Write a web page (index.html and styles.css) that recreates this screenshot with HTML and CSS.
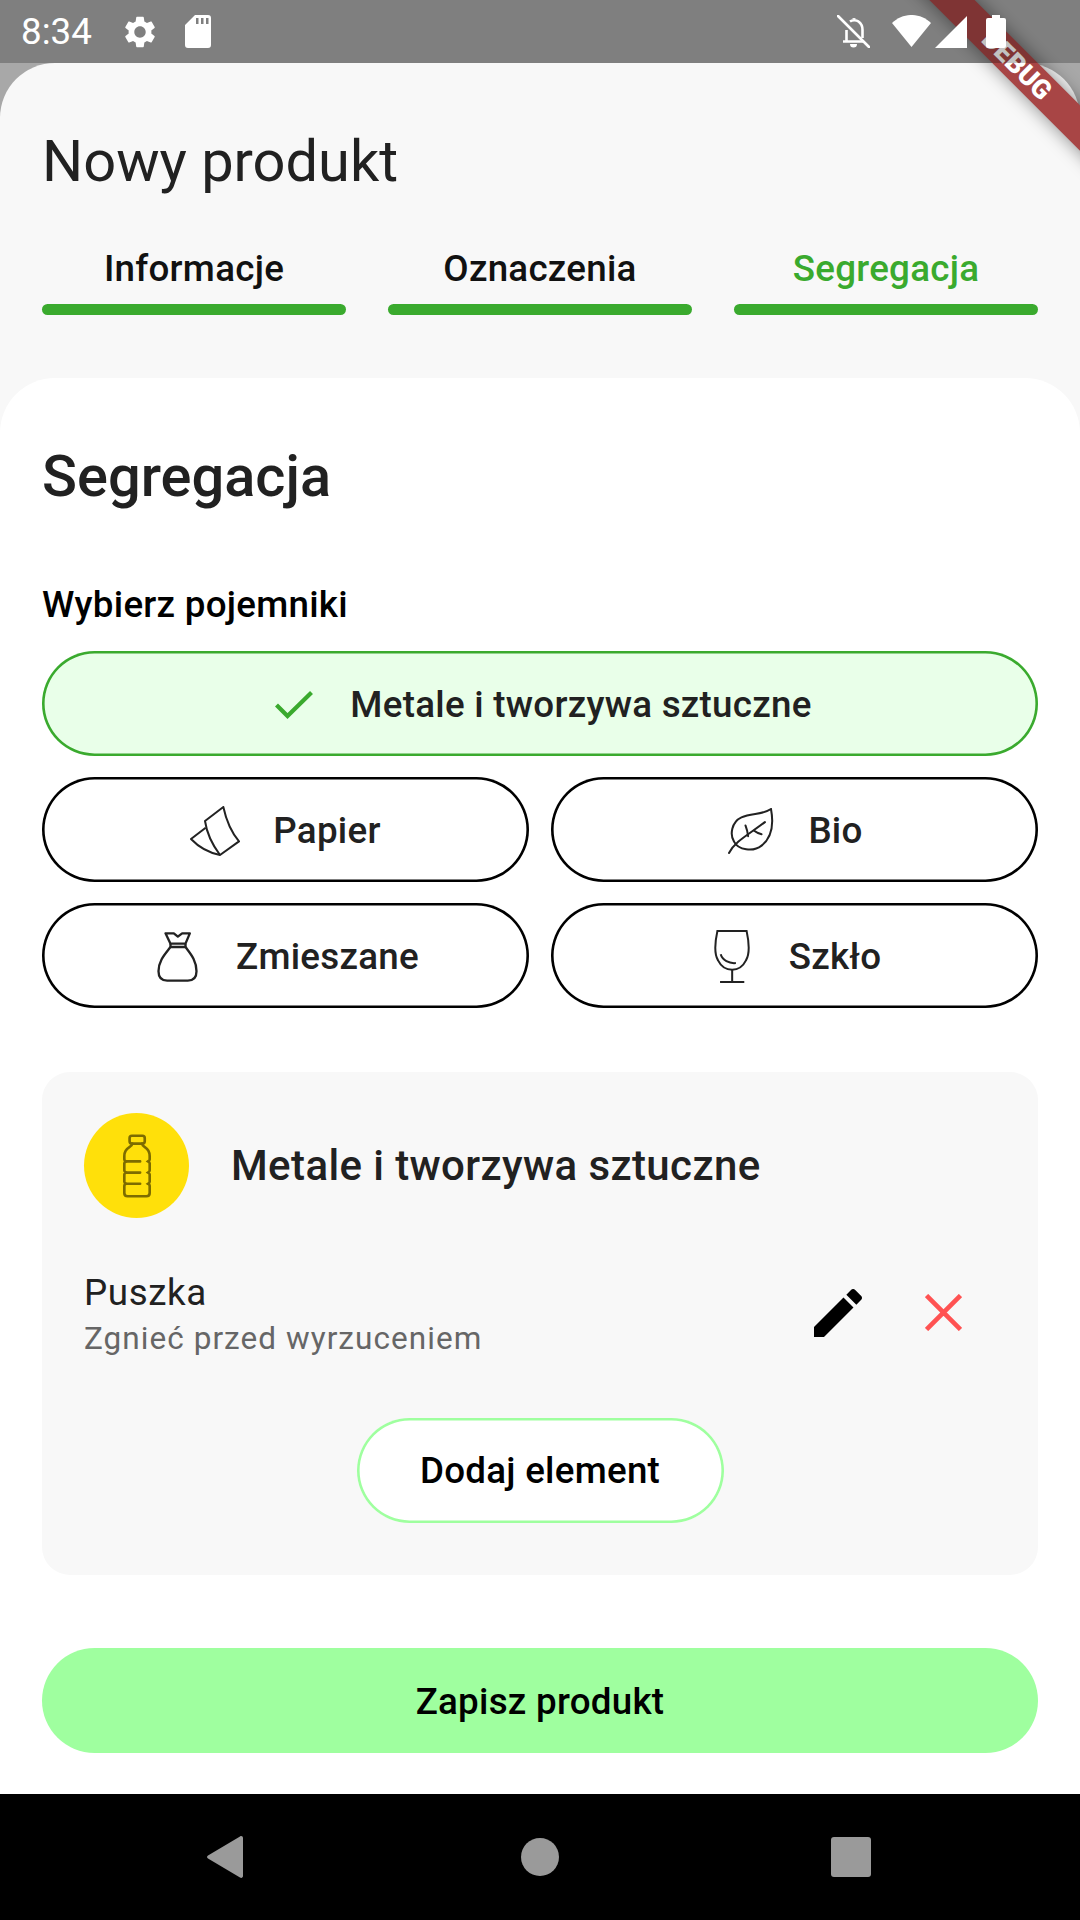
FILE: index.html

```html
<!DOCTYPE html>
<html lang="pl">
<head>
    <meta charset="UTF-8">
    <meta name="viewport" content="width=device-width, initial-scale=1.0">
    <title>Nowy produkt</title>
    <link rel="stylesheet" href="styles.css">
</head>
<body>
    <div class="app">
        <div class="status-bar">
            <span class="clock">8:34</span>
            <svg class="icon-gear" viewBox="0 0 24 24"><path fill="#fff" d="M19.14 12.94c.04-.3.06-.61.06-.94 0-.32-.02-.64-.07-.94l2.03-1.58c.18-.14.23-.41.12-.61l-1.92-3.32c-.12-.22-.37-.29-.59-.22l-2.39.96c-.5-.38-1.03-.7-1.62-.94l-.36-2.54c-.04-.24-.24-.41-.48-.41h-3.84c-.24 0-.43.17-.47.41l-.36 2.54c-.59.24-1.13.57-1.62.94l-2.39-.96c-.22-.08-.47 0-.59.22L2.74 8.87c-.12.21-.08.47.12.61l2.03 1.58c-.05.3-.09.63-.09.94s.02.64.07.94l-2.03 1.58c-.18.14-.23.41-.12.61l1.92 3.32c.12.22.37.29.59.22l2.39-.96c.5.38 1.03.7 1.62.94l.36 2.54c.05.24.24.41.48.41h3.84c.24 0 .44-.17.47-.41l.36-2.54c.59-.24 1.13-.56 1.62-.94l2.39.96c.22.08.47 0 .59-.22l1.92-3.32c.12-.22.07-.47-.12-.61l-2.01-1.58zM12 15.6c-1.98 0-3.6-1.62-3.6-3.6s1.62-3.6 3.6-3.6 3.6 1.62 3.6 3.6-1.62 3.6-3.6 3.6z"/></svg>
            <svg class="icon-sd" viewBox="0 0 26 33"><path fill="#fff" fill-rule="evenodd" d="M10 0H23a3 3 0 0 1 3 3V30a3 3 0 0 1-3 3H3a3 3 0 0 1-3-3V10zM11 3V9h2.500V3zM16 3V9h2.500V3zM21 3V9h2.500V3z"/></svg>
            <svg class="icon-bell" viewBox="0 0 33 33"><g fill="none" stroke="#fff" stroke-width="2.600"><path d="M6 26.500H27M9.500 26V15M13 6.500C15 5 19 4.500 21.500 6.500C25 9 25.500 12 25.500 15V23"/><path d="M1 1L32 32" stroke-linecap="round"/></g><path fill="#fff" d="M13 29h7a3.500 3.500 0 0 1-7 0zM15 4a2.500 2.500 0 0 1 4 0z"/></svg>
            <svg class="icon-wifi" viewBox="0 0 39 32"><path fill="#fff" d="M0 8C11-2.700 28-2.700 39 8L19.500 32z"/></svg>
            <svg class="icon-signal" viewBox="0 0 32 32"><path fill="#fff" d="M32 0V32H0z"/></svg>
            <svg class="icon-battery" viewBox="0 0 20 33"><path fill="#fff" d="M6 0H14V3H18a2 2 0 0 1 2 2V31a2 2 0 0 1-2 2H2a2 2 0 0 1-2-2V5a2 2 0 0 1 2-2H6z"/></svg>
        </div>

        <div class="debug-banner">DEBUG</div>

        <main class="sheet">
            <header class="sheet-head">
                <h1>Nowy produkt</h1>
                <div class="tabs">
                    <div class="tab">Informacje<div class="tab-bar"></div></div>
                    <div class="tab">Oznaczenia<div class="tab-bar"></div></div>
                    <div class="tab tab-active">Segregacja<div class="tab-bar"></div></div>
                </div>
            </header>

            <section class="panel">
                <h2>Segregacja</h2>
                <div class="field-label">Wybierz pojemniki</div>

                <div class="bins">
                    <button type="button" class="bin bin-wide bin-selected">
                        <svg class="bin-check" viewBox="0 0 38 28"><path fill="none" stroke="#3aaa2e" stroke-width="4.200" d="M1.500 14L12.500 25L36.500 1.500"/></svg>
                        Metale i tworzywa sztuczne
                    </button>
                    <button type="button" class="bin">
                        <svg class="bin-icon icon-paper" viewBox="0 0 150 150"><g fill="none" stroke="#222" stroke-width="6" stroke-linejoin="round"><path d="M100 3L45 45C50 80 70 120 90 147L147 106C125 80 108 40 100 3Z"/><path d="M47 65L3 99C25 122 55 140 90 147"/></g></svg>
                        Papier
                    </button>
                    <button type="button" class="bin">
                        <svg class="bin-icon icon-leaf" viewBox="0 0 137 137"><g fill="none" stroke="#222" stroke-width="6" stroke-linecap="round"><path d="M128 3C105 20 70 15 40 28C10 42 5 80 18 100C30 125 75 132 100 112C135 85 135 40 128 3Z"/><path d="M3 134C20 100 60 80 110 42"/><path d="M52 52C56 62 58 70 60 84M78 68C85 74 92 76 100 78"/></g></svg>
                        Bio
                    </button>
                    <button type="button" class="bin">
                        <svg class="bin-icon icon-bag" viewBox="0 0 122 150"><g fill="none" stroke="#222" stroke-width="7" stroke-linejoin="round"><path d="M25 4H50L62 14L75 4H98L85 35H40Z"/><path d="M40 35V45H85V35"/><path d="M40 45C25 65 4 85 4 118C4 140 15 146 30 146H92C107 146 118 140 118 118C118 85 100 65 85 45"/></g></svg>
                        Zmieszane
                    </button>
                    <button type="button" class="bin">
                        <svg class="bin-icon icon-glass" viewBox="0 0 107 157"><g fill="none" stroke="#222" stroke-width="6"><path d="M10 3H97C105 40 107 70 95 90C85 110 70 118 54 118C38 118 22 110 12 90C0 70 2 40 10 3Z"/><path d="M20 72C25 90 45 100 65 98M54 118V154M18 154H90"/></g></svg>
                        Szkło
                    </button>
                </div>

                <div class="bin-card">
                    <div class="bin-card-head">
                        <div class="bin-badge">
                            <svg class="icon-bottle" viewBox="0 0 85 192"><g fill="none" stroke="#7d6c00" stroke-width="8" stroke-linecap="round"><rect x="20" y="4" width="46" height="24" rx="7"/><path d="M28 28C28 42 4 36 4 66V76C4 79 6 80 9 82C6 84 4 85 4 88V110C4 113 6 114 9 116C6 118 4 119 4 122V144C4 147 6 148 9 150C6 152 4 153 4 156V178C4 184 8 188 14 188H71C77 188 81 184 81 178V156C81 153 79 152 76 150C79 148 81 147 81 144V122C81 119 79 118 76 116C79 114 81 113 81 110V88C81 85 79 84 76 82C79 80 81 79 81 76V66C81 36 58 42 58 28"/><path d="M9 82H52M9 116H52M9 150H52"/></g></svg>
                        </div>
                        <div class="bin-card-title">Metale i tworzywa sztuczne</div>
                    </div>

                    <div class="item-row">
                        <div class="item-text">
                            <div class="item-name">Puszka</div>
                            <div class="item-note">Zgnieć przed wyrzuceniem</div>
                        </div>
                        <svg class="icon-edit" viewBox="3 3 18 18"><path fill="#000" d="M3 17.250V21h3.750L17.810 9.940l-3.750-3.750L3 17.250zM20.710 7.040c.39-.39.39-1.020 0-1.410l-2.340-2.340c-.39-.39-1.020-.39-1.410 0l-1.830 1.830 3.750 3.750 1.830-1.830z"/></svg>
                        <svg class="icon-close" viewBox="0 0 36 36"><path fill="none" stroke="#ff5252" stroke-width="4.500" d="M1.500 1.500L34.500 34.500M34.500 1.500L1.500 34.500"/></svg>
                    </div>

                    <button type="button" class="add-item">Dodaj element</button>
                </div>

                <button type="button" class="save">Zapisz produkt</button>
            </section>
        </main>

        <nav class="nav-bar">
            <svg class="nav-back" viewBox="0 0 36 42"><path fill="#9a9a9a" d="M33 .500C34.500-.500 36 .500 36 2V40C36 41.500 34.500 42.500 33 41.500L1 22.500C-.300 21.500-.300 20.500 1 19.500Z"/></svg>
            <div class="nav-home"></div>
            <div class="nav-recent"></div>
        </nav>
    </div>
</body>
</html>
```

FILE: styles.css

```css
* { box-sizing: border-box; }
html, body { margin: 0; padding: 0; overflow: hidden; }
body { font-family: Roboto, "Noto Sans", sans-serif; color: #212121; }
button { font-family: inherit; cursor: pointer; }

.app { position: relative; width: 1080px; height: 1920px; display: flex; flex-direction: column; overflow: hidden; background: #a8a8a8; }

/* status bar sits above the debug ribbon, it tints it too */
.status-bar { position: relative; z-index: 2; height: 63px; flex: none; display: flex; align-items: center; padding-left: 21px; background: rgba(0, 0, 0, .24); color: #fff; }
.clock { font-size: 36.75px; line-height: 63px; width: 71px; white-space: nowrap; }
.status-bar svg { display: block; flex: none; }
.icon-gear { width: 38px; height: 38px; margin-left: 29px; }
.icon-sd { width: 26px; height: 33px; margin-left: 26px; }
.icon-bell { width: 33px; height: 33px; margin-left: auto; }
.icon-wifi { width: 39px; height: 32px; margin-left: 22px; margin-top: -2px; }
.icon-signal { width: 32px; height: 32px; margin-left: 4px; }
.icon-battery { width: 20px; height: 33px; margin-left: 19px; margin-right: 74px; }

.debug-banner { position: absolute; z-index: 1; left: 867px; top: 49px; width: 300px; height: 32px; transform: rotate(45deg); background: #a84545; box-shadow: 0 0 18px rgba(0, 0, 0, .45); color: #fff; font-size: 26.8px; font-weight: 900; line-height: 32px; text-align: center; }

.sheet { flex: 1; min-height: 0; display: flex; flex-direction: column; background: #f8f8f8; border-radius: 55px 55px 0 0; }
.sheet-head { height: 315px; flex: none; padding: 65px 42px 0; }
h1 { margin: 0; font-size: 57.75px; font-weight: 400; line-height: 66px; }
.tabs { display: flex; gap: 42px; margin-top: 55px; }
.tab { flex: 1; font-size: 36.75px; font-weight: 500; line-height: 39px; letter-spacing: .26px; text-align: center; color: #111; }
.tab-bar { height: 11px; margin-top: 16px; border-radius: 6px; background: #3aaa2e; }
.tab-active { color: #3aaa2e; }

.panel { flex: 1; min-height: 0; padding: 0 42px; background: #fff; border-radius: 55px 55px 0 0; }
h2 { margin: 0; padding-top: 65px; font-size: 57.75px; font-weight: 500; line-height: 66px; }
.field-label { margin-top: 75px; font-size: 36.75px; font-weight: 500; line-height: 42px; letter-spacing: .26px; color: #000; }

.bins { display: grid; grid-template-columns: 1fr 1fr; gap: 21px 22px; margin-top: 25px; }
.bin { height: 105px; display: flex; align-items: center; justify-content: center; padding: 2px 0 0; background: #fff; border: none; box-shadow: inset 0 0 0 2.6px #000; border-radius: 53px; font-size: 36.75px; font-weight: 500; letter-spacing: .26px; color: #212121; }
.bin-wide { grid-column: 1 / 3; }
.bin-selected { background: #e9ffe9; box-shadow: inset 0 0 0 2.6px #3aaa2e; }
.bin-check { width: 38px; height: 28px; margin-left: 7px; margin-right: 37px; }
.bin-icon { display: block; flex: none; }
.icon-paper { width: 50px; height: 50px; margin-right: 33px; }
.icon-leaf { width: 46px; height: 46px; margin-left: 2px; margin-right: 34px; }
.icon-bag { width: 41px; height: 50px; margin-left: 5px; margin-right: 38px; }
.icon-glass { width: 36px; height: 53px; margin-left: 6px; margin-right: 39px; }

.bin-card { height: 503px; margin-top: 64px; padding: 41px 42px 0; background: #f8f8f8; border-radius: 28px; }
.bin-card-head { display: flex; align-items: center; }
.bin-badge { width: 105px; height: 105px; flex: none; display: flex; align-items: center; justify-content: center; border-radius: 50%; background: #ffe00a; }
.icon-bottle { width: 28px; height: 64px; display: block; }
.bin-card-title { margin-left: 42px; font-size: 42px; font-weight: 500; letter-spacing: .39px; }

.item-row { display: flex; align-items: center; margin-top: 53px; }
.item-text { flex: 1; }
.item-name { font-size: 36.75px; line-height: 44px; letter-spacing: .62px; color: #212121; }
.item-note { margin-top: 4px; font-size: 31.5px; line-height: 40px; letter-spacing: 1.05px; color: #666; }
.icon-edit { width: 48px; height: 48px; flex: none; display: block; margin-top: -5px; }
.icon-close { width: 37px; height: 37px; flex: none; display: block; margin-left: 63px; margin-right: 34px; margin-top: -5px; }

.add-item { display: block; width: 367px; height: 105px; margin: 59px auto 0; padding: 0; background: #fff; border: none; box-shadow: inset 0 0 0 2.6px #9fff9f; border-radius: 53px; font-size: 36.75px; font-weight: 500; letter-spacing: .26px; color: #000; }

.save { display: block; width: 100%; height: 105px; margin-top: 73px; padding: 2px 0 0; background: #9fff9f; border: none; border-radius: 53px; font-size: 36.75px; font-weight: 500; letter-spacing: .26px; color: #000; }

.nav-bar { height: 126px; flex: none; display: flex; align-items: center; justify-content: space-between; padding: 0 209px 0 207px; background: #000; }
.nav-back { width: 36px; height: 42px; display: block; }
.nav-home { width: 38px; height: 38px; margin-left: 6px; border-radius: 50%; background: #9a9a9a; }
.nav-recent { width: 40px; height: 40px; border-radius: 3px; background: #9a9a9a; }
```
